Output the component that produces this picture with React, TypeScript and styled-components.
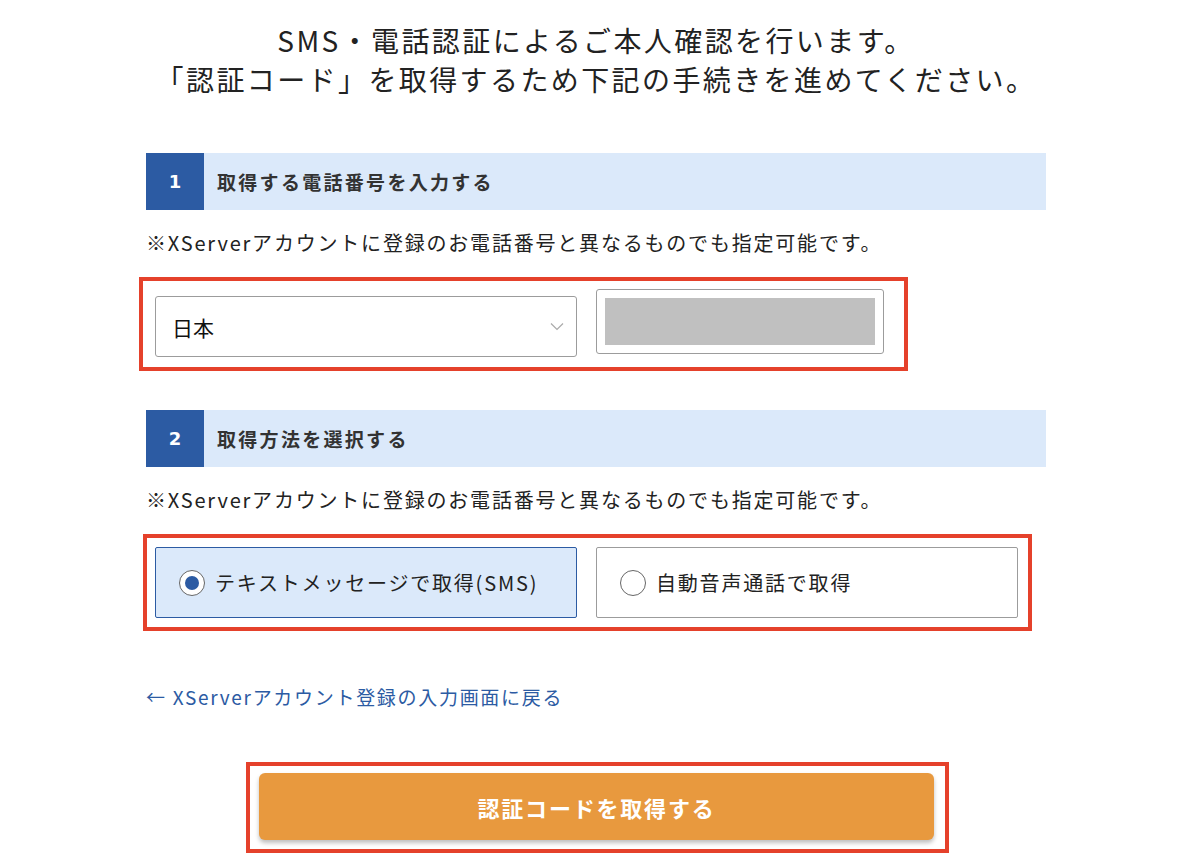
import { createGlobalStyle } from "styled-components";
import styled from "styled-components";

const GlobalStyle = createGlobalStyle`
  body {
    margin: 0;
    background: #fff;
    font-family: "Noto Sans CJK JP", "Noto Sans", sans-serif;
    color: #222;
  }
`;

const Page = styled.div`
  width: 900px;
  margin-left: 146px;
  padding-top: 21px;
`;

const Lead = styled.h1`
  margin: 0 0 54px;
  text-align: center;
  font-size: 28px;
  font-weight: 400;
  line-height: 39px;
  letter-spacing: 2.4px;
  color: #222;
`;

const StepHeader = styled.div`
  display: flex;
  height: 57px;
  background: #dbe9fa;
`;

const StepNumber = styled.div`
  width: 58px;
  display: flex;
  align-items: center;
  justify-content: center;
  background: #2c5ba3;
  color: #fff;
  font-family: "DejaVu Sans", sans-serif;
  font-weight: 700;
  font-size: 18px;
`;

const StepTitle = styled.div`
  display: flex;
  align-items: center;
  padding-left: 13px;
  font-size: 19px;
  font-weight: 700;
  letter-spacing: 2.3px;
  color: #333;
`;

const Note = styled.p`
  margin: 20px 0 21px;
  font-size: 20px;
  line-height: 26px;
  letter-spacing: 1.8px;
  color: #222;
`;

const Highlight = styled.div<{ $offset: number; $pad: string }>`
  box-sizing: border-box;
  width: fit-content;
  margin-left: ${(p) => p.$offset}px;
  padding: ${(p) => p.$pad};
  border: 4px solid #e5412b;
`;

const FieldRow = styled.div`
  display: flex;
  gap: 19px;
  align-items: flex-start;
`;

const SelectBox = styled.div`
  box-sizing: border-box;
  width: 422px;
  height: 61px;
  margin-top: 7px;
  display: flex;
  align-items: center;
  justify-content: space-between;
  padding: 0 12px 0 16px;
  border: 1px solid #9c9c9c;
  border-radius: 3px;
  font-size: 21px;
  color: #111;
`;

const PhoneBox = styled.div`
  box-sizing: border-box;
  width: 288px;
  height: 65px;
  padding: 8px;
  border: 1px solid #9c9c9c;
  border-radius: 3px;
`;

const Masked = styled.div`
  height: 100%;
  background: #c0c0c0;
`;

const OptionRow = styled.div`
  display: flex;
  gap: 19px;
`;

const Option = styled.label<{ $active?: boolean }>`
  box-sizing: border-box;
  width: 422px;
  height: 71px;
  display: flex;
  align-items: center;
  gap: 10px;
  padding-left: 23px;
  border: 1px solid ${(p) => (p.$active ? "#2c5ba3" : "#9c9c9c")};
  border-radius: 2px;
  background: ${(p) => (p.$active ? "#dbe9fa" : "#fff")};
  font-size: 20px;
  letter-spacing: 1.8px;
  color: #222;
`;

const Radio = styled.span<{ $checked?: boolean }>`
  box-sizing: border-box;
  width: 26px;
  height: 26px;
  flex: none;
  border-radius: 50%;
  border: 1px solid #666;
  background: #fff;
  display: flex;
  align-items: center;
  justify-content: center;

  &::after {
    content: "";
    width: 14px;
    height: 14px;
    border-radius: 50%;
    background: ${(p) => (p.$checked ? "#2c5ba3" : "transparent")};
  }
`;

const Spacer = styled.div<{ $h: number }>`
  height: ${(p) => p.$h}px;
`;

const BackLink = styled.a`
  display: block;
  margin: 0;
  font-size: 19px;
  line-height: 28px;
  letter-spacing: 1.7px;
  color: #2c5ba3;
  text-decoration: none;
`;

const SubmitButton = styled.button`
  width: 675px;
  height: 67px;
  border: none;
  border-radius: 6px;
  background: #e8993e;
  box-shadow: 0 3px 4px rgba(0, 0, 0, 0.25);
  color: #fff;
  font-family: inherit;
  font-size: 22px;
  font-weight: 700;
  letter-spacing: 1.8px;
  cursor: pointer;
`;

const Chevron = () => (
  <svg width="14" height="9" viewBox="0 0 14 9">
    <path d="M1 1.5 L7 7.5 L13 1.5" fill="none" stroke="#aaa" strokeWidth="1.2" />
  </svg>
);

function App() {
  return (
    <>
      <GlobalStyle />
      <Page>
        <Lead>
          SMS・電話認証によるご本人確認を行います。
          <br />
          「認証コード」を取得するため下記の手続きを進めてください。
        </Lead>

        <StepHeader>
          <StepNumber>1</StepNumber>
          <StepTitle>取得する電話番号を入力する</StepTitle>
        </StepHeader>
        <Note>※XServerアカウントに登録のお電話番号と異なるものでも指定可能です。</Note>
        <Highlight $offset={-7} $pad="8px 20px 10px 12px">
          <FieldRow>
            <SelectBox>
              日本
              <Chevron />
            </SelectBox>
            <PhoneBox>
              <Masked />
            </PhoneBox>
          </FieldRow>
        </Highlight>

        <Spacer $h={39} />

        <StepHeader>
          <StepNumber>2</StepNumber>
          <StepTitle>取得方法を選択する</StepTitle>
        </StepHeader>
        <Note>※XServerアカウントに登録のお電話番号と異なるものでも指定可能です。</Note>
        <Highlight $offset={-3} $pad="9px 10px 9px 8px">
          <OptionRow>
            <Option $active>
              <Radio $checked />
              テキストメッセージで取得(SMS)
            </Option>
            <Option>
              <Radio />
              自動音声通話で取得
            </Option>
          </OptionRow>
        </Highlight>

        <Spacer $h={52} />
        <BackLink href="#">← XServerアカウント登録の入力画面に戻る</BackLink>
        <Spacer $h={51} />

        <Highlight $offset={100} $pad="7px 11px 9px 9px">
          <SubmitButton>認証コードを取得する</SubmitButton>
        </Highlight>
      </Page>
    </>
  );
}

export default App;
